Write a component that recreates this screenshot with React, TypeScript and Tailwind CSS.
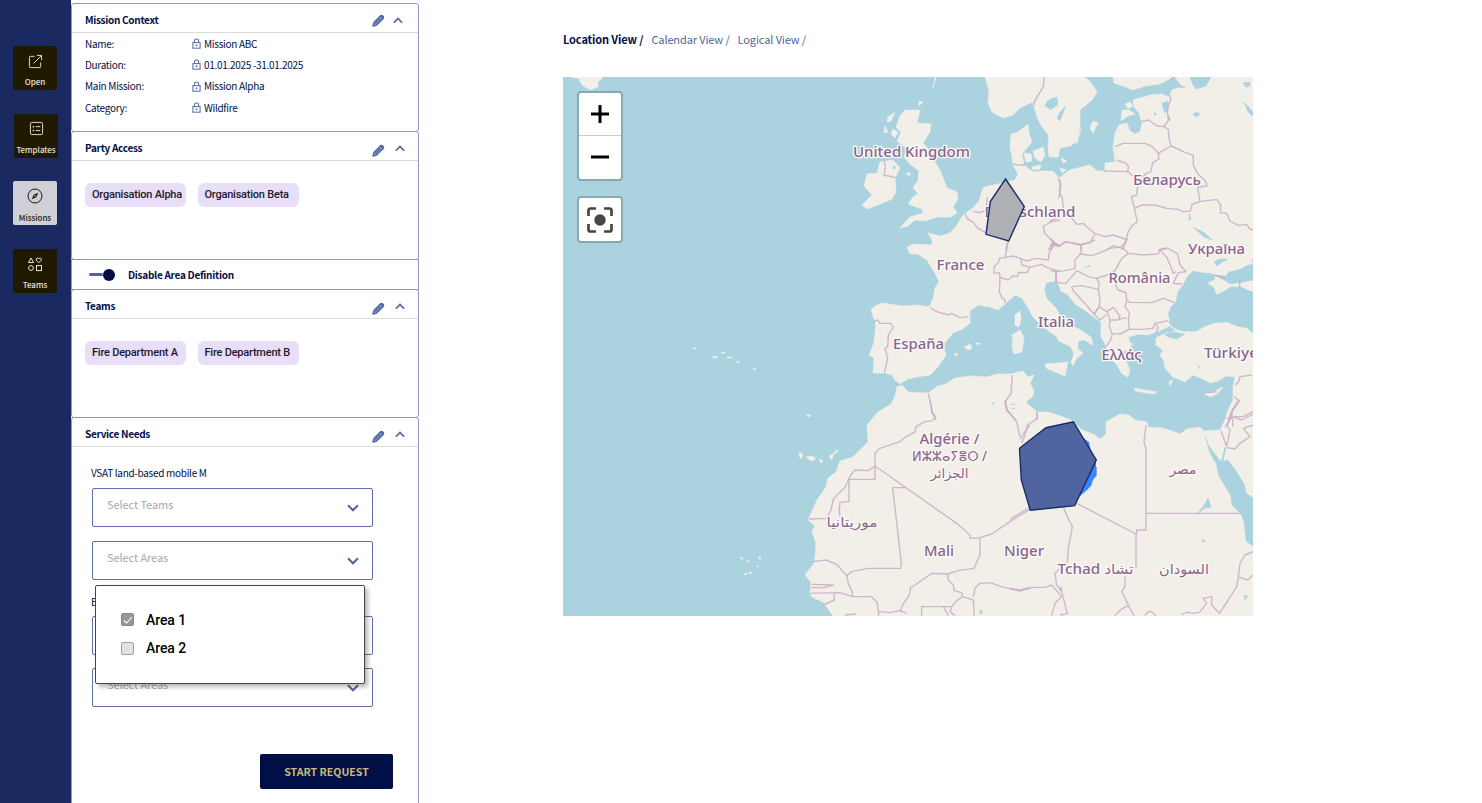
import type { ReactNode } from "react";

const LAND = "#f2efe9";
const SEA = "#aad3df";

function Pencil() {
  return (
    <svg viewBox="0 0 13 13" className="h-[13px] w-[13px]" fill="none">
      <path d="M1 12 L2 8.4 L8.6 1.8 L11.2 4.4 L4.6 11 Z" fill="#a9b3d4" stroke="#5064a2" strokeWidth="1.4" strokeLinejoin="round" />
      <path d="M8.4 2 L9.6 .8 Q10.1 .5 10.6 1 L12 2.4 Q12.5 2.9 12.1 3.4 L11 4.7 Z" fill="#5064a2" />
      <path d="M3.2 9.8 L9 4" stroke="#5064a2" strokeWidth="1.5" />
    </svg>
  );
}

function Chevron({ down = false }: { down?: boolean }) {
  return (
    <svg viewBox="0 0 12 8" className={down ? "h-2 w-3" : "h-[7px] w-[10px]"} fill="none" stroke="#5064a2" strokeWidth="2">
      <path d={down ? "M1 1.3 L6 6.3 L11 1.3" : "M1 6.7 L6 1.5 L11 6.7"} />
    </svg>
  );
}

function Lock() {
  return (
    <svg viewBox="0 0 10 12" className="h-[11px] w-[9px]" fill="none" stroke="#5f70a8" strokeWidth="1.2">
      <rect x="1" y="5" width="8" height="6.2" />
      <path d="M2.7 5 V3 Q2.7 1 5 1 Q7.3 1 7.3 3 V5" />
      <path d="M4 8 H6" strokeWidth="1.7" />
    </svg>
  );
}

function Header({ title, first = false }: { title: string; first?: boolean }) {
  return (
    <div className="flex h-[29px] shrink-0 items-center border-b border-[#dcdcdc] pl-[13px] pt-[3px]">
      <h2 className="flex-1 text-[10px] font-bold leading-4 tracking-[-0.3px] text-[#000f46]">{title}</h2>
      <div className={first ? "flex w-[46px] items-center gap-[8px] pt-px" : "flex w-[46px] items-center gap-[10px] pt-[5px]"}>
        <Pencil />
        <div className={first ? "flex" : "-mt-1 flex"}>
          <Chevron />
        </div>
      </div>
    </div>
  );
}

function Chip({ children }: { children: ReactNode }) {
  return (
    <span className="flex h-6 w-[101px] items-center whitespace-nowrap rounded-md bg-[#e8def8] pl-[7px] font-['Roboto',sans-serif] text-[11px] font-medium tracking-[-0.22px] text-[#1d192b]">
      {children}
    </span>
  );
}

function Select({ label }: { label: string }) {
  return (
    <div className="flex h-[39px] w-[281px] items-center rounded-[2px] border border-[#5f6fa5] bg-white pl-[14px] pr-[13px]">
      <span className="flex-1 pb-[7px] text-[11px] leading-4 tracking-[-0.08px] text-[#a8a8ab]">{label}</span>
      <Chevron down />
    </div>
  );
}

function NavTile({ label, active = false, children }: { label: string; active?: boolean; children: ReactNode }) {
  return (
    <div
      className={
        active
          ? "flex h-11 w-11 flex-col items-center justify-between rounded-[2px] bg-[#cfd0d7] pb-px pt-[7px] text-[#1f1900]"
          : "flex h-11 w-11 flex-col items-center justify-between rounded-[2px] bg-[#1f1900] pb-[2px] pt-[7px] text-[#e6e3da]"
      }
    >
      {children}
      <span className="text-[8px] font-medium leading-3 tracking-[-0.05px]">{label}</span>
    </div>
  );
}

const details = [
  ["Name:", "Mission ABC"],
  ["Duration:", "01.01.2025 -31.01.2025"],
  ["Main Mission:", "Mission Alpha"],
  ["Category:", "Wildfire"],
];

const mainland =
  "M907 247 L914 244 L932 245 L932 240 L928 233 L940 236 L950 233 L957 225 L963 215 L973 208 L979 201 L983 188 L988 186 L1003 183 L1015 180 L1018 174 L1013 165 L1012 157 L1010 147 L1011 134 L1018 132 L1022 129 L1028 124 L1029 134 L1032 142 L1026 149 L1022 154 L1024 165 L1033 172 L1040 171 L1053 171 L1059 178 L1070 170 L1090 165 L1097 171 L1105 171 L1105 163 L1115 162 L1113 147 L1115 133 L1119 125 L1127 123 L1130 131 L1135 134 L1140 132 L1142 123 L1139 113 L1134 107 L1133 100 L1150 95 L1162 94 L1169 97 L1172 90 L1178 88 L1187 88 L1180 84 L1175 77 H1253 V616 H833 L829 610 L823 602 L812 597 L810 593 L811 582 L805 575 L813 565 L815 558 L816 543 L812 532 L815 526 L808 520 L817 500 L826 487 L828 478 L836 472 L840 461 L853 457 L868 442 L867 425 L878 412 L891 404 L895 396 L897 387 L902 385 L908 392 L928 393 L938 386 L946 384 L955 378 L970 376 L987 377 L997 374 L1010 374 L1023 371 L1028 377 L1034 375 L1030 383 L1034 391 L1033 396 L1026 402 L1030 406 L1037 412 L1048 412 L1063 417 L1071 420 L1082 430 L1093 434 L1100 439 L1106 434 L1106 422 L1120 414 L1129 415 L1135 420 L1147 422 L1148 427 L1163 428 L1180 434 L1187 429 L1200 427 L1204 431 L1220 430 L1225 420 L1228 410 L1233 400 L1233 387 L1235 377 L1226 376 L1218 381 L1210 383 L1203 379 L1193 375 L1185 382 L1173 377 L1165 368 L1164 361 L1160 355 L1163 350 L1156 345 L1156 338 L1165 333 L1176 331 L1170 326 L1157 332 L1147 335 L1139 334 L1128 337 L1133 346 L1130 343 L1132 352 L1124 350 L1122 354 L1127 363 L1130 370 L1128 377 L1122 374 L1117 365 L1112 360 L1107 349 L1104 342 L1101 337 L1101 322 L1094 317 L1083 309 L1075 304 L1067 294 L1061 291 L1059 285 L1054 281 L1046 283 L1044 290 L1047 299 L1056 308 L1060 316 L1069 325 L1079 329 L1091 337 L1093 345 L1084 340 L1078 341 L1078 349 L1083 353 L1076 359 L1073 366 L1071 362 L1074 354 L1071 347 L1059 341 L1056 336 L1043 327 L1033 317 L1027 306 L1022 298 L1015 295 L1007 302 L998 310 L990 307 L978 305 L970 311 L970 323 L963 329 L953 333 L943 345 L946 355 L938 367 L930 375 L916 377 L908 379 L900 384 L895 380 L892 375 L885 373 L873 373 L874 358 L869 355 L874 343 L876 325 L871 310 L875 306 L882 303 L903 306 L918 305 L929 307 L933 299 L935 288 L939 282 L935 273 L931 267 L927 260 L918 254 L910 254 Z";

const islands = [
  "M905 110 L920 110 L917 123 L931 124 L930 132 L923 143 L930 151 L932 157 L940 170 L947 188 L957 192 L958 199 L953 207 L957 213 L950 217 L937 217 L925 221 L915 220 L908 226 L900 228 L910 217 L923 213 L922 209 L908 204 L913 197 L918 194 L913 187 L918 181 L919 171 L910 164 L904 157 L907 149 L897 141 L901 132 L896 127 L900 116 Z",
  "M880 162 L893 160 L900 168 L895 178 L896 192 L892 199 L883 203 L867 209 L862 205 L872 195 L864 186 L867 174 L877 173 Z",
  "M895 112 L888 117 L887 122 L891 121 Z M885 126 L888 132 L884 133 Z M893 129 L898 132 L895 138 L891 134 Z M935 77 H936 L933 88 Z M919 101 L923 102 L919 106 Z M907 172 L911 174 L908 176 Z",
  "M985 77 L987 83 L989 91 L988 103 L992 112 L1003 118 L1013 115 L1020 108 L1030 103 L1033 102 L1037 117 L1041 125 L1049 136 L1048 145 L1049 157 L1058 157 L1060 148 L1070 146 L1076 142 L1080 128 L1080 110 L1092 100 L1097 92 L1092 84 L1085 77 Z",
  "M1113 77 L1114 83 L1123 86 L1133 90 L1145 86 L1160 84 L1173 77 Z M1093 121 L1098 123 L1093 133 L1090 128 Z M1081 129 L1077 143 L1075 143 Z",
  "M1122 110 L1129 110 L1135 114 L1128 116 L1121 121 Z M1125 104 L1130 102 L1133 106 L1128 109 Z",
  "M1024 153 L1031 154 L1032 161 L1026 162 Z M1033 151 L1043 147 L1045 155 L1041 162 L1035 158 Z M1032 167 L1041 165 L1040 169 L1033 170 Z M1061 158 L1067 161 L1063 163 Z M1060 168 L1066 170 L1062 173 Z",
  "M1045 364 L1058 363 L1068 362 L1065 376 L1055 372 L1046 368 Z M1012 335 L1020 330 L1024 337 L1022 352 L1014 354 L1012 346 L1013 339 Z M1015 315 L1020 311 L1021 319 L1019 327 L1015 325 Z",
  "M1134 388 L1145 390 L1157 392 L1153 394 L1135 391 Z M1205 394 L1215 391 L1223 387 L1217 394 L1210 397 Z M964 347 L970 344 L972 348 L968 350 Z M975 343 H980 L979 345 Z M954 354 L957 353 L957 356 Z M1169 382 L1173 380 L1170 386 Z",
  "M571 77 H603 L598 82 L598 87 L590 90 L582 85 L579 79 Z",
  "M799 453 H802 V458 H800 Z M806 457 L813 456 L816 459 L811 461 Z M819 459 L823 461 L821 463 Z M829 456 L833 454 L832 460 Z M836 450 L838 451 L833 455 Z M806 415 H811 L809 417 Z",
  "M693 348 h3 v1 h-3 Z M713 356 l5 1 l-1 1 l-4 0 Z M721 353 l4 -1 l-1 2 Z M727 357 h5 v1 h-5 Z M736 361 l4 1 l-2 1 Z M753 368 l3 1 l-2 1 Z",
  "M740 557 l3 1 l-1 2 Z M746 561 h3 l-1 1 Z M758 557 l3 1 l-1 2 Z M757 565 l2 2 l-2 0 Z M749 572 l3 1 l-2 1 Z M744 574 l3 -1 l-1 2 Z",
];

const waters = [
  "M1193 271 L1203 273 L1213 274 L1215 279 L1207 283 L1214 288 L1216 295 L1223 292 L1231 287 L1241 287 L1247 290 L1253 292 V333 L1247 328 L1237 326 L1227 322 L1213 323 L1203 327 L1197 331 L1183 331 L1174 328 L1169 323 L1170 318 L1168 315 L1171 307 L1176 302 L1178 292 L1183 285 L1188 276 Z",
  "M1215 275 L1224 280 L1231 284 L1243 282 L1253 280 V264 L1246 266 L1241 269 L1229 272 L1226 276 Z",
  "M1164 334 L1173 332 L1185 334 L1177 339 L1168 337 Z",
  "M1205 436 L1209 446 L1221 462 L1225 447 L1226 448 L1223 461 L1228 460 L1236 471 L1244 484 L1246 493 L1253 498 V546 L1246 541 L1244 521 L1241 514 L1232 505 L1231 496 L1219 476 L1216 463 L1210 453 Z",
  "M1190 77 L1193 85 L1196 89 L1206 86 L1211 77 Z M1243 83 L1250 82 L1250 86 L1246 87 Z M1193 114 L1197 112 L1200 114 L1196 117 Z M1244 102 L1253 112 V116 L1248 112 Z",
  "M1162 103 L1168 101 L1168 110 L1165 113 L1163 108 Z M1168 115 L1171 120 H1168 Z M1050 99 L1057 97 L1058 105 L1050 110 Z M1047 101 L1054 99 L1050 109 L1045 106 Z M1060 112 L1066 106 L1060 121 L1057 118 Z",
  "M1193 227 L1205 233 L1212 240 L1204 237 Z M1189 213 L1191 219 L1189 221 Z M1154 113 h2 v2 h-2 Z M1084 268 L1090 265 L1090 266 Z M1197 365 l3 2 l0 1 Z M1214 262 L1219 259 L1228 259 L1222 262 L1217 266 Z",
  "M1208 498 L1211 507 L1205 508 L1196 515 L1203 507 Z M1202 540 h3 l-1 2 h-2 Z M1244 595 l4 1 l-3 4 Z M1060 587 h2 v4 h-2 Z M980 610 h2 v4 h-2 Z M992 403 h2 v1 h-2 Z M1011 404 h4 v.5 h-4 Z M1011 408 h4 v.5 h-4 Z",
];

const borders: { at: string; d: string[] }[] = [
  {
    at: "translate(860 70) scale(.33333)",
    d: [
      "M553 18 L550 50 L523 95 L524 105",
      "M73 273 L76 290 L72 316 L86 318 L105 323",
      "M460 282 L470 285 L494 285",
      "M315 432 L322 446 L340 458 L354 475 L378 488",
      "M338 424 L360 428 L378 420 L382 380",
      "M445 510 L437 540",
      "M600 330 L600 370 L596 385 M600 450 L575 455 L550 468 L554 490 L580 515 L565 540 M580 515 L600 528",
    ],
  },
  {
    at: "translate(1050 70) scale(.33333)",
    d: [
      "M370 18 L363 28 M358 75 L363 88 L355 105 L352 125 L356 150 L342 170 L322 168 L295 150 L273 155",
      "M342 170 L355 178 L357 205 L363 228 L345 238 L325 250 L307 230 L285 220 L220 220 L195 230",
      "M325 250 L327 267 L308 278 L303 305 L288 310 L275 325 L245 315 L235 305 L160 303",
      "M200 270 L229 280 L235 290 L233 305",
      "M363 228 L390 240 L405 247 L430 256 L430 285 L442 310 L468 335 L470 348 L443 352 L450 395",
      "M25 325 L33 348 L28 365 L37 385 L40 415 L70 450 L80 463 L100 460 L112 472 L133 490 L165 500 L190 495 L233 510",
      "M265 330 L260 375 L245 380 L253 415 L262 455 L245 468 L233 490 L228 515 L218 540",
      "M253 415 L275 405 L315 405 L350 415 L385 418 L398 425 L421 423 L427 402 L450 395 L500 388 L512 405 L511 428 L530 430 L540 453 L565 466 L590 463 L600 477 L609 480",
      "M0 505 L12 520 L30 528 L48 515 L93 523 L120 518 L135 492 M93 523 L94 540 M0 540 L12 522 M0 453 L20 445 M170 540 L190 527 L218 536 M325 540 L350 533",
    ],
  },
  {
    at: "translate(860 240) scale(.33333)",
    d: [
      "M445 5 L435 53 L418 55 L415 68 L402 80 L402 100 L418 98 L420 115 L418 155 L425 172 L435 180 L435 190",
      "M435 53 L460 48 L482 55 L500 63 L528 55 L565 60 L567 40 L582 15 L577 0",
      "M420 112 L445 120 L458 108 L472 110 L476 97 L500 98 L510 82 L545 73 L560 82 L600 95",
      "M482 55 L486 75 L510 82 M582 15 L600 20 M588 92 L590 130",
      "M210 203 L230 215 L265 225 L275 220 L300 233 L326 230",
      "M38 246 L53 240 L60 250 L92 250 L100 262 L85 285 L83 320 L75 325 L83 355 L73 398",
      "M205 460 L210 480 L218 520 L228 540 M457 405 L453 460 L435 487 L440 510 L458 530 L465 540 M532 518 L532 540",
    ],
  },
  {
    at: "translate(1050 240) scale(.33333)",
    d: [
      "M0 15 L12 12 L28 18 L45 5 L90 15 L118 8 L135 0 M93 15 L93 40 L75 60 L75 85 L45 92 L18 95 L0 92",
      "M93 42 L125 47 L150 38 L180 25 L215 20 L230 0 M215 20 L235 40 L280 45 L325 42 L330 30 L355 25",
      "M235 40 L215 55 L195 92 L172 105 L140 115 L115 110 L80 92 M18 95 L17 128 L48 130 L58 118 L80 92",
      "M330 30 L350 52 L362 78 L370 100 L378 95 M355 25 L383 42 L390 75 L408 95 L385 98 L370 130 L396 132",
      "M65 140 L70 152 L100 185 L135 225 M65 140 L95 137 L145 148 L150 180 L148 200 L133 220",
      "M138 113 L148 130 L145 148 M195 132 L205 150 L228 158 L230 180 L240 187 L305 188 L340 175 L375 188",
      "M230 180 L225 200 L238 218 L235 240 L238 268 L280 268 L308 265 L315 250 L355 242 M315 250 L325 262 L318 280",
      "M148 200 L170 215 L190 202 L210 228 L205 240 L180 240 L172 215 M148 200 L132 222 L150 240 L168 225",
      "M180 240 L178 260 L185 280 L210 282 L238 268 M205 238 L230 233 M188 280 L182 300 L168 320",
      "M490 105 L525 115 M569 120 V145 M472 458 L500 455 M605 405 L570 410 L566 425 L556 435 M553 470 L565 480 L545 515 L540 540 L525 560 M530 535 L545 535 L548 505 M609 515 L580 530 L550 530",
      "M609 55 V70",
    ],
  },
  {
    at: "translate(790 400) scale(.33333)",
    d: [
      "M420 0 L426 38 L437 50 L428 62 L405 65 L378 80 L376 95 L345 112 L330 125 L270 145 L255 158 V238 H177 V305 L150 307 L148 330 L150 350",
      "M255 200 L232 212 L195 210 L182 225 L165 262 L130 297 L123 330 L110 355 L57 357",
      "M255 198 L500 370 L540 405 L540 415 L570 413 L605 402 L670 358 L720 328",
      "M345 263 H308 L334 490 L332 505 H235 L185 515 L170 527 L140 493 L108 480 L68 485",
      "M570 413 V465 L552 505 L505 512 L472 522 L425 520 L375 555 L362 562 L358 585 L335 620 L332 635",
      "M170 527 L175 550 L188 578 L187 590 L220 590 L245 590 L262 608 L265 635 L300 638 L330 632 L350 640",
      "M65 553 L130 555 L100 563 L62 563 M62 580 L150 578 L188 590 M133 582 V600 L100 615 M165 645 L198 642 M267 635 L265 647",
      "M472 522 L475 540 L490 555 L492 572 L515 578 L518 590 L500 602 L485 620 L395 620 V647",
      "M518 590 L550 600 L553 647 M550 590 L555 565 L570 550 L600 548 L640 562 L690 570 L720 562 M485 620 L480 635 L495 647 M460 620 L475 647",
      "M645 0 L652 30 L680 65 L690 110 M720 75 L705 95 L690 118",
    ],
  },
  {
    at: "translate(1010 400) scale(.33333)",
    d: [
      "M80 35 L82 55 L52 75 L45 105 L35 130 M0 358 L60 322 M160 322 L172 350 L187 380 L175 445 L172 485 L135 520 L140 555 L155 575 L172 640",
      "M200 310 L378 402 V505 M408 75 L402 125 L408 145 V390 H380 V402 M408 340 H693",
      "M0 567 L30 573 L70 562 L105 562 L125 555 L155 590 L135 610 L125 647 M345 530 V560 L335 575 L350 605 L360 625 L372 647 M150 645 L175 640",
      "M315 647 Q335 622 355 618 M405 647 Q415 632 425 635 L437 647 M515 645 Q530 632 543 640 M545 640 L568 637 L590 610 L580 595 L605 590 V615 L628 640 L655 600 L680 560 L685 530 L690 490 L705 465 L729 455 M683 530 L713 540 L728 525",
      "M690 0 L662 40 L652 80 L660 90 L650 140 M652 55 H668 V80 M668 50 L695 60 L729 42 M729 75 L700 85 L720 110 L690 130 L675 147 L650 143 M633 92 L650 140",
    ],
  },
];

const labels: { t: string; x: number; y: number; w: number }[] = [
  { t: "United Kingdom", x: 911.5, y: 157, w: 117 },
  { t: "Deutschland", x: 1030, y: 217, w: 91 },
  { t: "Беларусь", x: 1167, y: 185, w: 68 },
  { t: "Україна", x: 1216.5, y: 253.5, w: 57 },
  { t: "France", x: 960.5, y: 270, w: 48 },
  { t: "România", x: 1139.5, y: 282.5, w: 62 },
  { t: "Italia", x: 1056, y: 327, w: 36 },
  { t: "España", x: 918.5, y: 348.5, w: 51 },
  { t: "Ελλάς", x: 1121.5, y: 360, w: 40 },
  { t: "Türkiye", x: 1231, y: 358, w: 54 },
  { t: "Algérie /", x: 949.5, y: 444, w: 60 },
  { t: "ⵍⵣⵣⴰⵢⴻⵔ /", x: 949.5, y: 461, w: 75 },
  { t: "الجزائر", x: 949.5, y: 478, w: 38 },
  { t: "ليبيا", x: 1086, y: 477, w: 24 },
  { t: "مصر", x: 1183, y: 473.5, w: 27 },
  { t: "موريتانيا", x: 852, y: 527, w: 51 },
  { t: "Mali", x: 939, y: 555.5, w: 30 },
  { t: "Niger", x: 1024, y: 556, w: 40 },
  { t: "Tchad تشاد", x: 1095.5, y: 573.5, w: 76 },
  { t: "السودان", x: 1184, y: 574, w: 50 },
];

function MapDrawing() {
  return (
    <svg viewBox="563 77 690 539" className="block h-[539px] w-[690px]">
      <rect x="563" y="77" width="690" height="539" fill={SEA} />
      <g fill={LAND} stroke={LAND} strokeWidth=".6" strokeLinejoin="round">
        <path d={mainland} />
        {islands.map((d) => (
          <path key={d} d={d} />
        ))}
      </g>
      <g fill={SEA} stroke={SEA} strokeWidth=".5" strokeLinejoin="round">
        {waters.map((d) => (
          <path key={d} d={d} />
        ))}
        <path d="M893 167 l2 -1 l0 3 l-2 0 Z M1129 341 l8 -3 l5 3 l-6 3 Z" />
      </g>
      <g fill="none" stroke="#c9adc6" strokeOpacity=".85" strokeWidth="4.2" strokeLinejoin="round">
        {borders.map((b) => (
          <g key={b.at} transform={b.at}>
            {b.d.map((d) => (
              <path key={d} d={d} />
            ))}
          </g>
        ))}
      </g>
      <g
        className="font-['Noto_Sans','DejaVu_Sans',sans-serif]"
        fontSize="13.5"
        fontWeight="500"
        textAnchor="middle"
        fill="#8a6488"
        stroke="#fbf9f8"
        strokeWidth="2.6"
        strokeLinejoin="round"
        paintOrder="stroke"
      >
        {labels.map((l) => (
          <text key={l.t} x={l.x} y={l.y} textLength={l.w} lengthAdjust="spacingAndGlyphs">
            {l.t}
          </text>
        ))}
      </g>
      <path d="M1083 438 L1089 442 L1091 451 L1096 460 L1096 476 L1093 480 L1091 486 L1087 490 L1080 496 L1074 490 Z" fill="#3388ff" />
      <path d="M1005.5 179 L1024.3 206.5 L1008.7 241 L986 234.3 L990.3 201.5 Z" fill="#afb0b4" stroke="#1a2a66" strokeWidth="1.4" />
      <path d="M1019.5 448.3 L1046 427.7 L1073.3 421.7 L1096.3 460 L1074.7 505.7 L1030.3 510.3 L1021.3 480 Z" fill="#5064a0" stroke="#1a2a66" strokeWidth="1.4" />
    </svg>
  );
}

export default function App() {
  return (
    <div className="flex h-[803px] w-[1482px] overflow-hidden bg-white font-['Noto_Sans_CJK_SC',sans-serif] text-[#000f46]">
      <nav className="flex w-[71px] shrink-0 flex-col gap-[23.5px] bg-[#1a2960] pl-[13px] pt-[46px]">
        <NavTile label="Open">
          <svg viewBox="0 0 16 16" className="mt-px h-[15px] w-[15px]" fill="none" stroke="currentColor" strokeWidth="1">
            <path d="M7 2.5 H2.5 Q1.5 2.5 1.5 3.5 V13.5 Q1.5 14.5 2.5 14.5 H12.5 Q13.5 14.5 13.5 13.5 V9 M9.5 1.5 H14.5 V6.5 M14.2 1.8 L6 10" />
          </svg>
        </NavTile>
        <div className="ml-px">
          <NavTile label="Templates">
            <svg viewBox="0 0 16 16" className="h-[15px] w-[15px]" fill="none" stroke="currentColor" strokeWidth="1">
              <rect x="1.5" y="1.5" width="13" height="13" rx="1.5" />
              <path d="M7.3 6 H12 M7.3 10.2 H12" />
              <path d="M4 6 H5.5 M4 10.2 H5.5" strokeWidth="1.6" />
            </svg>
          </NavTile>
        </div>
        <NavTile label="Missions" active>
          <svg viewBox="0 0 16 16" className="h-4 w-4" fill="none" stroke="currentColor" strokeWidth="1">
            <circle cx="8" cy="8" r="7" />
            <path d="M11.2 4.8 L9.4 9.3 L4.8 11.2 L6.6 6.7 Z" fill="currentColor" stroke="none" />
            <circle cx="8" cy="8" r=".8" fill="#cfd0d7" stroke="none" />
          </svg>
        </NavTile>
        <NavTile label="Teams">
          <svg viewBox="0 0 16 16" className="h-4 w-4" fill="none" stroke="currentColor" strokeWidth="1">
            <path d="M4 2 L6.5 6.5 H1.5 Z M11.8 6.8 L9.3 4.2 Q8.7 2.3 10.3 2 Q11.4 2 11.8 3 Q12.2 2 13.3 2 Q14.9 2.3 14.3 4.2 Z" />
            <circle cx="4" cy="12" r="2.4" />
            <rect x="9.5" y="9.6" width="5" height="5" />
          </svg>
        </NavTile>
      </nav>

      <aside className="flex w-[348px] shrink-0 flex-col pt-[3px]">
        <section className="flex h-[129px] shrink-0 flex-col rounded-[3px] border border-[#8d9ac6]">
          <Header title="Mission Context" first />
          <dl className="flex flex-col pl-[13px] text-[10px] tracking-[-0.3px]">
            {details.map(([k, v]) => (
              <div key={k} className="flex h-[21.3px] items-center leading-5">
                <dt className="w-[107px]">{k}</dt>
                <dd className="flex items-center gap-[3px] whitespace-pre">
                  <Lock />
                  {v}
                </dd>
              </div>
            ))}
          </dl>
        </section>
        <section className="-mt-px flex h-[129px] shrink-0 flex-col rounded-[3px] border border-[#8d9ac6]">
          <Header title="Party Access" />
          <div className="flex gap-[11.5px] pl-[13px] pt-[22px]">
            <Chip>Organisation Alpha</Chip>
            <Chip>Organisation Beta</Chip>
          </div>
        </section>
        <section className="-mt-px flex h-[31px] shrink-0 items-center border border-[#8d9ac6] pl-[17px]">
          <span className="flex w-[26px] items-center">
            <span className="h-[3px] w-[14px] rounded-full bg-[#5064a2]" />
            <span className="h-3 w-3 rounded-full bg-[#000f46]" />
          </span>
          <span className="ml-[13px] text-[10px] font-bold leading-4 tracking-[-0.28px]">Disable Area Definition</span>
        </section>
        <section className="-mt-px flex h-[129px] shrink-0 flex-col rounded-[3px] border border-[#8d9ac6]">
          <Header title="Teams" />
          <div className="flex gap-[11.5px] pl-[13px] pt-[22px]">
            <Chip>Fire Department A</Chip>
            <Chip>Fire Department B</Chip>
          </div>
        </section>
        <section className="relative -mt-px flex h-[400px] shrink-0 flex-col rounded-t-[3px] border border-[#8d9ac6]">
          <Header title="Service Needs" />
          <div className="flex flex-col pl-5 pt-[18px]">
            <span className="-ml-px text-[10px] leading-4 tracking-[-0.3px]">VSAT land-based mobile M</span>
            <div className="mt-[7px] flex flex-col gap-[14px]">
              <Select label="Select Teams" />
              <Select label="Select Areas" />
            </div>
            <span className="-ml-px mt-[14px] h-4 text-[10px] leading-4">E</span>
            <div className="mt-[6px] flex flex-col gap-[13px]">
              <Select label="" />
              <Select label="Select Areas" />
            </div>
          </div>
          <button className="ml-[188px] mt-[47px] h-[35px] w-[133px] rounded-[2px] bg-[#000f46] text-[10.6px] font-bold leading-4 text-[#cdb97d]">START REQUEST</button>
          <div className="absolute left-[23px] top-[167px] flex h-[99px] w-[270px] flex-col gap-2 rounded-[2px] border border-[#45454a] bg-white pl-[25px] pt-6 font-['Roboto',sans-serif] text-sm font-medium tracking-[-0.1px] text-black shadow-[3px_3px_4px_rgba(0,0,0,0.28)]">
            <div className="flex h-5 items-center gap-3">
              <span className="mb-px flex h-[13px] w-[13px] items-center justify-center rounded-[2px] border border-[#87878c] bg-[#98989c]">
                <svg viewBox="0 0 10 10" className="h-[10px] w-[10px]" fill="none" stroke="white" strokeWidth="1.1">
                  <path d="M1 5.5 L3.6 8 L9 2" />
                </svg>
              </span>
              Area 1
            </div>
            <div className="flex h-5 items-center gap-3">
              <span className="h-[13px] w-[13px] rounded-[2px] border border-[#a0a0a6] bg-[#e2e2e4]" />
              Area 2
            </div>
          </div>
        </section>
      </aside>

      <main className="flex flex-col pl-36 pt-[31px]">
        <div className="flex h-4 items-center gap-2 whitespace-nowrap text-[11px] leading-4 tracking-[-0.12px]">
          <span className="font-bold">Location View /</span>
          <span className="text-[#5064a2]">Calendar View /</span>
          <span className="text-[#5064a2]">Logical View /</span>
        </div>
        <div className="relative mt-[30px] h-[539px] w-[690px] overflow-hidden">
          <MapDrawing />
          <div className="absolute left-[14px] top-[14px] flex w-[46px] flex-col gap-[15px]">
            <div className="flex h-[90px] flex-col rounded-[4px] border-2 border-[#87a9b3] bg-white">
              <div className="flex h-[43px] items-center justify-center border-b border-[#ccc]">
                <svg viewBox="0 0 18 18" className="h-[18px] w-[18px]" stroke="black" strokeWidth="3">
                  <path d="M0 9 H18 M9 0 V18" />
                </svg>
              </div>
              <div className="flex h-[42px] items-center justify-center">
                <svg viewBox="0 0 18 18" className="h-[18px] w-[18px]" stroke="black" strokeWidth="3">
                  <path d="M0 9 H18" />
                </svg>
              </div>
            </div>
            <div className="flex h-[47px] items-center justify-center rounded-[4px] border-2 border-[#87a9b3] bg-white">
              <svg viewBox="0 0 26 26" className="h-[26px] w-[26px]" fill="none" stroke="#464646" strokeWidth="2.7">
                <path d="M1.5 9 V3.5 Q1.5 1.5 3.5 1.5 H9 M17 1.5 H22.5 Q24.5 1.5 24.5 3.5 V9 M24.5 17 V22.5 Q24.5 24.5 22.5 24.5 H17 M9 24.5 H3.5 Q1.5 24.5 1.5 22.5 V17" />
                <circle cx="13" cy="13" r="5.7" fill="#464646" stroke="none" />
              </svg>
            </div>
          </div>
        </div>
      </main>
    </div>
  );
}
